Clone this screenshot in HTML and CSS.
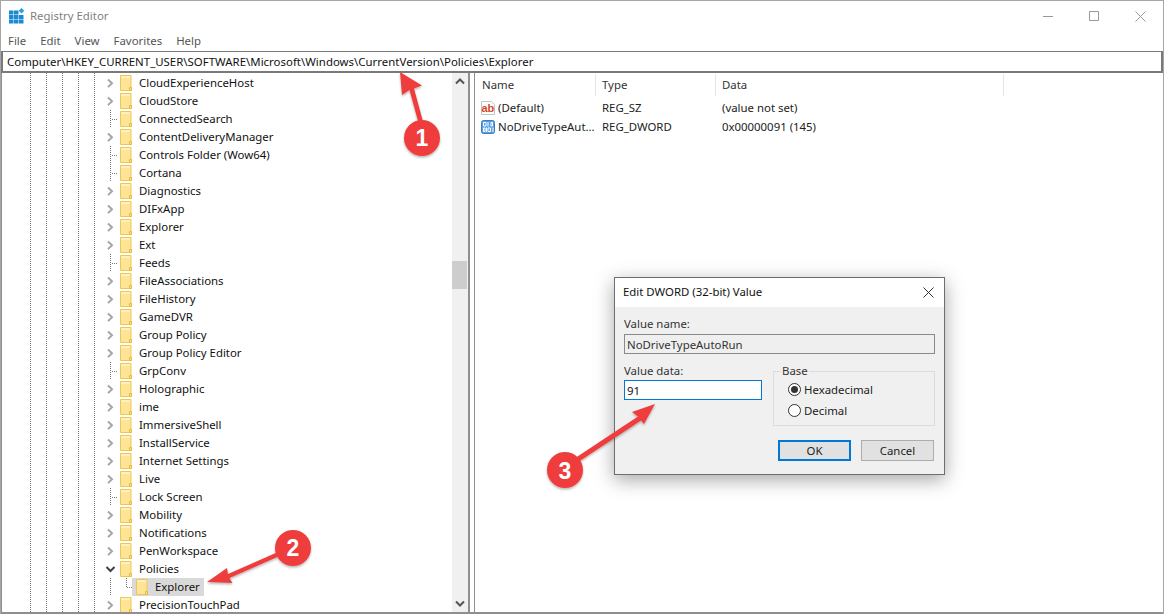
FILE: index.html
```html
<!DOCTYPE html>
<html lang="en">
<head>
<meta charset="utf-8">
<title>Registry Editor</title>
<link rel="stylesheet" href="styles.css">
</head>
<body>
<svg class="defs" width="0" height="0" aria-hidden="true">
  <symbol id="folder" viewBox="0 0 13 16">
    <path d="M.5.5h10.5v15H.5z" fill="#fde595" stroke="#eec658"/>
    <path d="M1 1h9v2H1z" fill="#fff0bd"/>
    <path d="M9.5 15.5v-3h2v3z" fill="#fbe08a" stroke="#e8b93c"/>
  </symbol>
  <symbol id="chev" viewBox="0 0 16 18">
    <path d="M6 5.5l4 3.8-4 3.8" fill="none" stroke="#a6a6a6" stroke-width="2"/>
  </symbol>
</svg>
<div class="window">
  <header class="titlebar">
    <svg class="appicon" width="16" height="16" viewBox="0 0 16 16">
      <path d="M0 2.500h4.500v4H0zM5 2.500h4.500v4H5zM0 7h4.500v4H0zM5 7h4.500v4H5zM10 7h4.500v4H10zM0 11.500h4.500v4H0zM5 11.500h4.500v4H5zM10 11.500h4.500v4H10z" fill="#1b8ad2"/>
      <path d="M12.500 0l2.800 2.800-2.800 2.800-2.800-2.800z" fill="#2aa0e0"/>
    </svg>
    <span class="apptitle">Registry Editor</span>
    <div class="winctrls">
      <span class="winbtn"><svg width="11" height="11" viewBox="0 0 11 11"><path d="M0 5.500h10" stroke="#999" fill="none"/></svg></span>
      <span class="winbtn"><svg width="11" height="11" viewBox="0 0 11 11"><path d="M.5.500h9v9h-9z" stroke="#999" fill="none"/></svg></span>
      <span class="winbtn"><svg width="11" height="11" viewBox="0 0 11 11"><path d="M.5.500l10 10M10.500.500l-10 10" stroke="#999" fill="none"/></svg></span>
    </div>
  </header>
  <nav class="menubar">
    <span>File</span><span>Edit</span><span>View</span><span>Favorites</span><span>Help</span>
  </nav>
  <div class="address">Computer\HKEY_CURRENT_USER\SOFTWARE\Microsoft\Windows\CurrentVersion\Policies\Explorer</div>
  <main class="split">
    <section class="treepane">
      <div class="tree">
        <div class="row"><span class="exp"><svg width="16" height="18"><use href="#chev"/></svg></span><svg class="folder"><use href="#folder"/></svg><span class="name">CloudExperienceHost</span></div>
        <div class="row"><span class="exp"><svg width="16" height="18"><use href="#chev"/></svg></span><svg class="folder"><use href="#folder"/></svg><span class="name">CloudStore</span></div>
        <div class="row"><span class="exp leaf"></span><svg class="folder"><use href="#folder"/></svg><span class="name">ConnectedSearch</span></div>
        <div class="row"><span class="exp"><svg width="16" height="18"><use href="#chev"/></svg></span><svg class="folder"><use href="#folder"/></svg><span class="name">ContentDeliveryManager</span></div>
        <div class="row"><span class="exp leaf"></span><svg class="folder"><use href="#folder"/></svg><span class="name">Controls Folder (Wow64)</span></div>
        <div class="row"><span class="exp leaf"></span><svg class="folder"><use href="#folder"/></svg><span class="name">Cortana</span></div>
        <div class="row"><span class="exp"><svg width="16" height="18"><use href="#chev"/></svg></span><svg class="folder"><use href="#folder"/></svg><span class="name">Diagnostics</span></div>
        <div class="row"><span class="exp"><svg width="16" height="18"><use href="#chev"/></svg></span><svg class="folder"><use href="#folder"/></svg><span class="name">DIFxApp</span></div>
        <div class="row"><span class="exp"><svg width="16" height="18"><use href="#chev"/></svg></span><svg class="folder"><use href="#folder"/></svg><span class="name">Explorer</span></div>
        <div class="row"><span class="exp"><svg width="16" height="18"><use href="#chev"/></svg></span><svg class="folder"><use href="#folder"/></svg><span class="name">Ext</span></div>
        <div class="row"><span class="exp leaf"></span><svg class="folder"><use href="#folder"/></svg><span class="name">Feeds</span></div>
        <div class="row"><span class="exp"><svg width="16" height="18"><use href="#chev"/></svg></span><svg class="folder"><use href="#folder"/></svg><span class="name">FileAssociations</span></div>
        <div class="row"><span class="exp"><svg width="16" height="18"><use href="#chev"/></svg></span><svg class="folder"><use href="#folder"/></svg><span class="name">FileHistory</span></div>
        <div class="row"><span class="exp"><svg width="16" height="18"><use href="#chev"/></svg></span><svg class="folder"><use href="#folder"/></svg><span class="name">GameDVR</span></div>
        <div class="row"><span class="exp"><svg width="16" height="18"><use href="#chev"/></svg></span><svg class="folder"><use href="#folder"/></svg><span class="name">Group Policy</span></div>
        <div class="row"><span class="exp"><svg width="16" height="18"><use href="#chev"/></svg></span><svg class="folder"><use href="#folder"/></svg><span class="name">Group Policy Editor</span></div>
        <div class="row"><span class="exp leaf"></span><svg class="folder"><use href="#folder"/></svg><span class="name">GrpConv</span></div>
        <div class="row"><span class="exp"><svg width="16" height="18"><use href="#chev"/></svg></span><svg class="folder"><use href="#folder"/></svg><span class="name">Holographic</span></div>
        <div class="row"><span class="exp"><svg width="16" height="18"><use href="#chev"/></svg></span><svg class="folder"><use href="#folder"/></svg><span class="name">ime</span></div>
        <div class="row"><span class="exp"><svg width="16" height="18"><use href="#chev"/></svg></span><svg class="folder"><use href="#folder"/></svg><span class="name">ImmersiveShell</span></div>
        <div class="row"><span class="exp"><svg width="16" height="18"><use href="#chev"/></svg></span><svg class="folder"><use href="#folder"/></svg><span class="name">InstallService</span></div>
        <div class="row"><span class="exp"><svg width="16" height="18"><use href="#chev"/></svg></span><svg class="folder"><use href="#folder"/></svg><span class="name">Internet Settings</span></div>
        <div class="row"><span class="exp"><svg width="16" height="18"><use href="#chev"/></svg></span><svg class="folder"><use href="#folder"/></svg><span class="name">Live</span></div>
        <div class="row"><span class="exp leaf"></span><svg class="folder"><use href="#folder"/></svg><span class="name">Lock Screen</span></div>
        <div class="row"><span class="exp"><svg width="16" height="18"><use href="#chev"/></svg></span><svg class="folder"><use href="#folder"/></svg><span class="name">Mobility</span></div>
        <div class="row"><span class="exp"><svg width="16" height="18"><use href="#chev"/></svg></span><svg class="folder"><use href="#folder"/></svg><span class="name">Notifications</span></div>
        <div class="row"><span class="exp"><svg width="16" height="18"><use href="#chev"/></svg></span><svg class="folder"><use href="#folder"/></svg><span class="name">PenWorkspace</span></div>
        <div class="row"><span class="exp"><svg width="16" height="18" viewBox="0 0 16 18"><path d="M4.500 7l4 4 4-4" fill="none" stroke="#404040" stroke-width="2"/></svg></span><svg class="folder"><use href="#folder"/></svg><span class="name">Policies</span></div>
        <div class="row"><span class="exp vline"></span><span class="elbow"></span><span class="selected"><svg class="folder flat"><use href="#folder"/></svg><span class="name">Explorer</span></span></div>
        <div class="row"><span class="exp"><svg width="16" height="18"><use href="#chev"/></svg></span><svg class="folder"><use href="#folder"/></svg><span class="name">PrecisionTouchPad</span></div>
      </div>
      <div class="vscroll">
        <svg class="sarrow" width="16" height="17" viewBox="0 0 16 17"><path d="M4 10.500l4-4 4 4" fill="none" stroke="#555" stroke-width="2"/></svg>
        <div class="strack"><div class="sthumb"></div></div>
        <svg class="sarrow" width="16" height="17" viewBox="0 0 16 17"><path d="M4 6.500l4 4 4-4" fill="none" stroke="#555" stroke-width="2"/></svg>
      </div>
    </section>
    <section class="listpane">
      <div class="listhead">
        <span class="hcell">Name</span><span class="hcell">Type</span><span class="hcell">Data</span>
      </div>
      <div class="listrow">
        <span class="cell namecell">
          <svg class="vicon" width="16" height="16" viewBox="0 0 16 16"><path d="M1.500 1.500h10l3 3v10h-13z" fill="#fff" stroke="#c4c4c4"/><text class="abtext" x="1.500" y="11.500">ab</text></svg>
          <span class="vname">(Default)</span>
        </span>
        <span class="cell">REG_SZ</span><span class="cell">(value not set)</span>
      </div>
      <div class="listrow">
        <span class="cell namecell">
          <svg class="vicon" width="16" height="16" viewBox="0 0 16 16"><rect x="1.500" y="1.500" width="13" height="13" rx="2" fill="#5a9fe2" stroke="#3a7fc4"/><path d="M3.500 3.500h2.500v3.500h-2.500zM11 3.500h1.500v3.500H11zM3.500 9h1.500v3.500H3.500zM8 9h2.500v3.500H8z" fill="none" stroke="#fff"/><path d="M8 3v4.500M13 8.500v4.500M6.500 8.500v4.500" stroke="#fff"/></svg>
          <span class="vname">NoDriveTypeAut...</span>
        </span>
        <span class="cell">REG_DWORD</span><span class="cell">0x00000091 (145)</span>
      </div>
    </section>
  </main>

  <div class="dialog">
    <div class="dlgtitle">
      <span class="dlgcaption">Edit DWORD (32-bit) Value</span>
      <svg width="11" height="11" viewBox="0 0 11 11"><path d="M.5.500l10 10M10.500.500l-10 10" stroke="#333" fill="none"/></svg>
    </div>
    <div class="dlgbody">
      <div class="lbl">Value name:</div>
      <div class="field readonly">NoDriveTypeAutoRun</div>
      <div class="dlgmid">
        <div class="datacol">
          <div class="lbl">Value data:</div>
          <div class="field active">91</div>
        </div>
        <fieldset class="basebox">
          <legend>Base</legend>
          <div class="radio"><span class="rdot on"></span>Hexadecimal</div>
          <div class="radio"><span class="rdot"></span>Decimal</div>
        </fieldset>
      </div>
      <div class="dlgbtns">
        <span class="btn primary">OK</span>
        <span class="btn">Cancel</span>
      </div>
    </div>
  </div>

  <svg class="marks" width="1164" height="614" viewBox="0 0 1164 614">
    <defs>
      <filter id="ds" x="-30%" y="-30%" width="160%" height="160%"><feDropShadow dx="0" dy="1.500" stdDeviation="1.200" flood-color="#000" flood-opacity=".3"/></filter>
    </defs>
    <g fill="#ef3e3e" filter="url(#ds)">
      <path d="M400 72l2 23 7.500-5 9 33 4.500-1.500-9-33 8-3z"/>
      <path d="M207 582l20-14 1 6 50-22 1.500 4-50 22 3 5z"/>
      <path d="M655 404l-23 8 6 4.500-62 41 3 4 62-41 3 3.500z"/>
      <circle cx="422" cy="138" r="18"/>
      <circle cx="293" cy="548" r="18"/>
      <circle cx="565" cy="470" r="18"/>
    </g>
    <text class="num" x="422" y="146">1</text>
    <text class="num" x="293" y="556">2</text>
    <text class="num" x="565" y="479">3</text>
  </svg>
</div>
</body>
</html>
```

FILE: styles.css
```css
* { box-sizing: border-box; }
html, body { margin: 0; padding: 0; }
body {
  width: 1164px;
  height: 614px;
  overflow: hidden;
  font-family: "Noto Sans", "Open Sans", sans-serif;
  font-size: 11.4px;
  color: #1a1a1a;
  background: #fff;
}
.defs { position: absolute; }
.window {
  position: relative;
  width: 1164px;
  height: 614px;
  display: flex;
  flex-direction: column;
  background: #fff;
  border: 1px solid #a6a6a6;
  border-bottom: 0;
}
.titlebar {
  height: 30px;
  display: flex;
  align-items: center;
  padding-left: 8px;
}
.appicon { flex: none; }
.apptitle { margin-left: 5px; margin-top: -2px; color: #7f7f7f; }
.winctrls { margin-left: auto; display: flex; }
.winbtn {
  width: 46px;
  height: 30px;
  display: flex;
  align-items: center;
  justify-content: center;
}
.menubar {
  height: 20px;
  display: flex;
  align-items: center;
  gap: 14px;
  padding: 0 0 2px 7px;
  color: #555;
}
.address {
  height: 22px;
  border: 2px solid #7a7a7a;
  border-top-width: 1px;
  padding-left: 4px;
  line-height: 20px;
  letter-spacing: .025px;
  color: #111;
  white-space: nowrap;
}
.split {
  flex: 1;
  min-height: 0;
  display: flex;
  border-left: 1px solid #8f8f8f;
  border-bottom: 2px solid #8f8f8f;
}
.treepane {
  width: 468px;
  flex: none;
  display: flex;
  border-right: 2px solid #8f8f8f;
}
.tree {
  flex: 1;
  min-width: 0;
  overflow: hidden;
  padding-top: 1px;
  background-image:
    linear-gradient(#777 50%, transparent 50%),
    linear-gradient(#777 50%, transparent 50%),
    linear-gradient(#777 50%, transparent 50%),
    linear-gradient(#777 50%, transparent 50%),
    linear-gradient(#777 50%, transparent 50%);
  background-size: 1px 2px;
  background-repeat: repeat-y;
  background-position: 28px 0, 44px 0, 60px 0, 76px 0, 92px 0;
}
.row {
  height: 18px;
  display: flex;
  align-items: center;
  padding-left: 100px;
  white-space: nowrap;
}
.exp {
  position: relative;
  width: 16px;
  height: 18px;
  flex: none;
  display: block;
}
.exp svg { display: block; }
.leaf::before, .vline::before, .elbow::before {
  content: "";
  position: absolute;
  left: 8px;
  top: 0;
  width: 1px;
  height: 18px;
  background: linear-gradient(#777 50%, transparent 50%) 0 0 / 1px 2px repeat-y;
}
.leaf::after, .elbow::after {
  content: "";
  position: absolute;
  left: 10px;
  top: 9px;
  width: 6px;
  height: 1px;
  background: linear-gradient(90deg, #777 50%, transparent 50%) 0 0 / 2px 1px repeat-x;
}
.elbow {
  position: relative;
  width: 14px;
  height: 18px;
  flex: none;
}
.elbow::before { height: 9px; }
.elbow::after { left: 9px; width: 5px; }
.folder {
  width: 13px;
  height: 16px;
  margin-left: 2px;
  flex: none;
}
.folder.flat { margin-left: 0; }
.name { margin-left: 6px; margin-top: -1px; color: #111; }
.selected {
  height: 18px;
  display: flex;
  align-items: center;
  padding: 0 4px;
  background: #d9d9d9;
}
.selected .name { margin-left: 6px; }
.vscroll {
  width: 16px;
  flex: none;
  display: flex;
  flex-direction: column;
  background: #f0f0f0;
}
.sarrow { flex: none; display: block; }
.strack { flex: 1; padding-top: 171px; }
.sthumb { width: 15px; height: 28px; background: #cdcdcd; }
.listpane { flex: 1; min-width: 0; border-left: 1px solid #8f8f8f; margin-left: 4px; }
.listhead, .listrow {
  display: grid;
  grid-template-columns: 121px 120px 288px;
}
.listhead { height: 25px; align-items: start; padding-top: 1px; }
.hcell {
  height: 22px;
  line-height: 22px;
  padding-left: 7px;
  border-right: 1px solid #e5e5e5;
  color: #333;
}
.hcell + .hcell { padding-left: 6px; }
.listrow { height: 19px; align-items: center; }
.cell { padding-left: 6px; white-space: nowrap; color: #222; }
.namecell {
  display: flex;
  align-items: center;
  padding-left: 5px;
}
.vicon { flex: none; }
.abtext { font: bold 11px "Liberation Sans", sans-serif; fill: #d2472a; }
.vname { margin-left: 2px; }
.dialog {
  position: absolute;
  left: 613px;
  top: 276px;
  width: 331px;
  height: 198px;
  display: flex;
  flex-direction: column;
  background: #f0f0f0;
  border: 1px solid #6e6e6e;
  box-shadow: 0 5px 18px rgba(0, 0, 0, .35);
  color: #222;
}
.dlgtitle {
  height: 29px;
  background: #fff;
  display: flex;
  align-items: center;
  justify-content: space-between;
  padding: 0 10px 0 8px;
  flex: none;
  color: #111;
}
.dlgcaption { margin-top: -2px; }
.dlgbody {
  flex: 1;
  padding: 9px 9px 0;
  display: flex;
  flex-direction: column;
}
.lbl { height: 17px; line-height: 15px; color: #333; }
.field {
  height: 20px;
  line-height: 19px;
  padding-left: 2px;
  border: 1px solid #8a8a8a;
}
.field.readonly { background: #efefef; color: #333; width: 311px; margin-top: 1px; }
.field.active { background: #fff; border-color: #0078d7; width: 138px; color: #111; }
.dlgmid { display: flex; margin-top: 9px; gap: 11px; height: 64px; }
.datacol { width: 138px; }
.basebox {
  width: 162px;
  height: 61px;
  margin: 2px 0 0;
  padding: 0 0 0 8px;
  border: 1px solid #dcdcdc;
}
.basebox legend { padding: 0 1px; margin-left: -1px; line-height: 12px; color: #333; }
.radio { height: 21px; display: flex; align-items: center; gap: 3px; padding-left: 6px; color: #222; }
.basebox .radio:first-of-type { margin-top: 2px; }
.rdot {
  width: 13px;
  height: 13px;
  border: 1px solid #333;
  border-radius: 50%;
  background: #fff;
  flex: none;
  position: relative;
}
.rdot.on::after {
  content: "";
  position: absolute;
  left: 2px;
  top: 2px;
  width: 7px;
  height: 7px;
  border-radius: 50%;
  background: #333;
}
.dlgbtns { display: flex; gap: 10px; margin-top: 13px; padding-left: 154px; }
.btn {
  width: 73px;
  height: 21px;
  line-height: 19px;
  text-align: center;
  background: #e1e1e1;
  border: 1px solid #adadad;
  color: #222;
}
.btn.primary { border: 2px solid #0078d7; line-height: 17px; }
.marks { position: absolute; left: -1px; top: -1px; pointer-events: none; }
.num {
  font: bold 23px "Liberation Sans", sans-serif;
  fill: #fff;
  text-anchor: middle;
}
```
